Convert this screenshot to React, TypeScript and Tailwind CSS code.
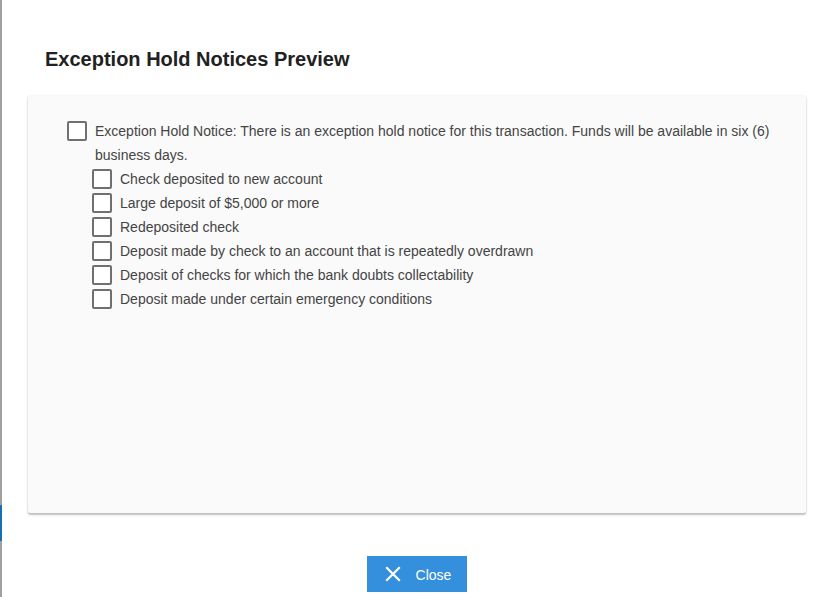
import React from "react";

const HOLD_REASONS = [
  "Check deposited to new account",
  "Large deposit of $5,000 or more",
  "Redeposited check",
  "Deposit made by check to an account that is repeatedly overdrawn",
  "Deposit of checks for which the bank doubts collectability",
  "Deposit made under certain emergency conditions",
];

function Box() {
  return <span className="mt-[2px] inline-block h-[20px] w-[20px] shrink-0 rounded-[2px] border-2 border-[#707070] bg-white" />;
}

export default function App() {
  return (
    <div className="flex h-[597px] w-[830px] overflow-hidden bg-white font-['Liberation_Sans',Arial,sans-serif]">
      {/* page edge behind the dialog */}
      <div className="flex w-[2px] flex-col bg-[#a0a0a0]">
        <div className="mt-[505px] h-[36px] bg-[#1a6fb0]" />
      </div>

      <div className="flex flex-1 flex-col pl-[26px] pr-[24px]">
        <h2 className="mt-[46px] pl-[17px] text-[20px] font-bold leading-[26px] text-[#212121]">
          Exception Hold Notices Preview
        </h2>

        <div className="mt-[24px] h-[417px] rounded-[2px] bg-[#fafafa] pl-[39px] pr-[30px] pt-[23px] shadow-[0_2px_2px_rgba(0,0,0,0.24),0_0_2px_rgba(0,0,0,0.12)]">
          <label className="flex items-start gap-[8px] text-[14px] leading-[24px] text-[#444]">
            <Box />
            <span>
              Exception Hold Notice: There is an exception hold notice for this transaction. Funds will be available in six (6) business days.
            </span>
          </label>
          <div className="flex flex-col pl-[25px]">
            {HOLD_REASONS.map((r) => (
              <label key={r} className="flex items-start gap-[8px] text-[14px] leading-[24px] text-[#444]">
                <Box />
                <span>{r}</span>
              </label>
            ))}
          </div>
        </div>

        <div className="mt-[43px] flex justify-center">
          <button className="flex h-[36px] w-[100px] items-center justify-center gap-[15px] bg-[#3490dc] pl-[2px] text-[14px] leading-[36px] text-white">
            <svg width="16" height="16" viewBox="0 0 16 16" fill="none" stroke="white" strokeWidth="2.2" strokeLinecap="square">
              <path d="M2 2L14 14M14 2L2 14" />
            </svg>
            <span className="pt-[2px]">Close</span>
          </button>
        </div>
      </div>
    </div>
  );
}
